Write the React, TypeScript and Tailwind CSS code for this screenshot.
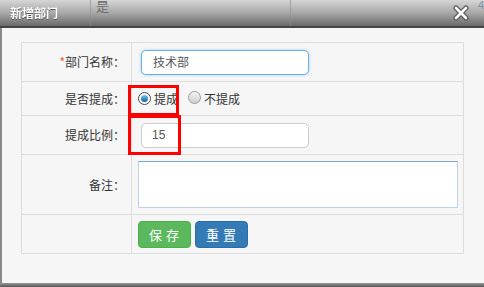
const font = "font-['SimSun','Noto_Sans_CJK_SC',sans-serif]";

const Radio = ({ checked }: { checked?: boolean }) => (
  <span
    className={`inline-flex items-center justify-center w-[13px] h-[13px] rounded-full border ${
      checked ? "border-[#4a4a4a] bg-white" : "border-[#9a9a9a] bg-gradient-to-b from-[#f4f4f4] to-[#d0d0d0]"
    }`}
  >
    {checked && <span className="w-[7px] h-[7px] rounded-full bg-gradient-to-b from-[#6ec3f0] to-[#1a5f9e]" />}
  </span>
);

const Row = ({
  label,
  required,
  height,
  children,
  last,
}: {
  label: string;
  required?: boolean;
  height: string;
  children?: React.ReactNode;
  last?: boolean;
}) => (
  <div className={`flex ${height} ${last ? "" : "border-b border-[#dddddd]"}`}>
    <div className="w-[110px] shrink-0 border-r border-[#dddddd] flex items-center justify-end pr-[6px] text-[12px] text-[#333]">
      {required && <span className="text-[#f05a28]">*</span>}
      {label}
    </div>
    <div className="flex-1 flex items-center pl-[9px]">{children}</div>
  </div>
);

export default function App() {
  return (
    <div className={`w-[484px] h-[287px] overflow-hidden bg-[#f6f6f6] relative flex flex-col ${font}`}>
      {/* title bar */}
      <div className="h-[28px] shrink-0 relative bg-gradient-to-b from-[#d6d6d6] via-[#a8a8a8] to-[#6a6a6a] border-b-2 border-[#444] flex items-center">
        <span className="ml-[10px] text-white font-bold text-[12px] drop-shadow-[0_1px_0_#555]">新增部门</span>
        <span className="absolute left-[90px] top-0 h-full w-px bg-[#8a8a8a]/60" />
        <span className="absolute left-[290px] top-0 h-full w-px bg-[#8a8a8a]/60" />
        <span className="absolute left-[96px] top-[-4px] text-[13px] text-[#6a6a6a]">是</span>
        <span className="absolute right-0 top-[-3px] text-[11px] text-[#7a8fa8] font-['Liberation_Sans',sans-serif]">4</span>
        <svg className="absolute left-[453px] top-[5px]" width="16" height="16" viewBox="0 0 16 16">
          <path d="M3 3 L13 13 M13 3 L3 13" stroke="#555" strokeWidth="5" strokeLinecap="round" />
          <path d="M3 3 L13 13 M13 3 L3 13" stroke="#fff" strokeWidth="2.6" strokeLinecap="round" />
        </svg>
      </div>

      {/* body */}
      <div className="flex-1 flex border-l-2 border-[#8a8a8a]">
        <div className="relative mt-[14px] ml-[19px] w-[443px] h-[212px] border border-[#dddddd]">
          <Row label="部门名称：" required height="h-[39px]">
            <div className="w-[168px] h-[25px] rounded-[5px] border border-[#66afe9] shadow-[0_0_3px_rgba(102,175,233,0.6)] bg-white flex items-center pl-[11px] text-[12px] text-[#555]">
              技术部
            </div>
          </Row>
          <Row label="是否提成：" height="h-[34px]">
            <div className="-ml-[3px] flex items-center text-[12px] text-[#333]">
              <Radio checked />
              <span className="ml-[3px]">提成</span>
              <span className="ml-[10px]"><Radio /></span>
              <span className="ml-[3px]">不提成</span>
            </div>
          </Row>
          <Row label="提成比例：" height="h-[39px]">
            <div className="w-[168px] h-[25px] rounded-[5px] border border-[#cccccc] bg-white flex items-center pl-[10px] text-[12px] text-[#555] font-['Liberation_Sans',sans-serif]">
              15
            </div>
          </Row>
          <Row label="备注：" height="h-[60px]">
            <div className="-ml-[3px] w-[320px] h-[47px] border border-[#bcd3e8] border-t-[#7fa6cc] bg-white" />
          </Row>
          <Row label="" height="h-[39px]" last>
            <div className="-ml-[3px] flex gap-[4px]">
              <button className="w-[53px] h-[27px] rounded-[4px] bg-[#5cb85c] border border-[#4cae4c] text-white text-[13px] tracking-[4px] pl-[3px]">保存</button>
              <button className="w-[53px] h-[27px] rounded-[4px] bg-[#337ab7] border border-[#2e6da4] text-white text-[13px] tracking-[4px] pl-[3px]">重置</button>
            </div>
          </Row>

          {/* highlight boxes */}
          <div className="absolute left-[106px] top-[42px] w-[51px] h-[31px] border-[3px] border-[#ff0000]" />
          <div className="absolute left-[106px] top-[72px] w-[53px] h-[40px] border-[3px] border-[#ff0000]" />
        </div>
      </div>

      <div className="h-[4px] shrink-0 bg-gradient-to-b from-[#9a9a9a] to-[#555]" />
    </div>
  );
}
